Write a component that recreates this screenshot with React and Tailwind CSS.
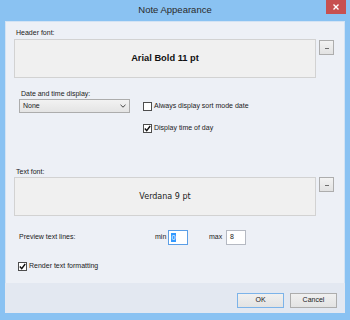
import React from "react";

function Check({ checked }) {
  return (
    <div className="w-[9px] h-[9px] bg-white border border-[#4d4d4d] flex items-center justify-center shrink-0">
      {checked && (
        <svg width="7" height="7" viewBox="0 0 7 7">
          <path d="M0.8 3.6 L2.7 5.6 L6.2 1.0" stroke="#111" strokeWidth="1.4" fill="none" />
        </svg>
      )}
    </div>
  );
}

function DotsButton() {
  return (
    <div className="w-[15px] h-[15px] border border-[#adadad] bg-gradient-to-b from-[#f3f3f3] to-[#e2e2e2] flex items-end justify-center pb-[5px] shrink-0">
      <div className="w-[4px] h-[1px] bg-[#6f6f6f]" />
    </div>
  );
}

function FontBox({ children, className }) {
  return (
    <div className={"w-[302px] h-[39px] bg-[#f0f0f0] border border-[#d2d2d2] flex items-center justify-center " + className}>
      {children}
    </div>
  );
}

export default function App() {
  return (
    <div className="w-[350px] h-[320px] bg-[#8ac2f2] flex flex-col px-[5px] pb-[7px] font-['Liberation_Sans',Arial,sans-serif] text-[7px] text-[#1a1a1a]">
      <div className="relative h-[21px] flex items-center justify-center text-[9.5px] text-[#2a2a2a]">
        <span className="-mt-[1px]">Note Appearance</span>
        <div className="absolute right-[-1px] top-0 w-[20px] h-[14px] bg-[#c75050] flex items-center justify-center">
          <svg width="6" height="6" viewBox="0 0 6 6">
            <path d="M0.5 0.5 L5.5 5.5 M5.5 0.5 L0.5 5.5" stroke="#fff" strokeWidth="1.4" />
          </svg>
        </div>
      </div>

      <div className="flex-1 flex flex-col bg-[#edf0f6] shadow-[inset_0_0_0_1px_#d3e3f4]">
        <div className="pt-[6px] flex flex-col">
          <div className="ml-[11px] leading-[12px]">Header font:</div>
          <div className="flex ml-[9px]">
            <FontBox className="font-bold text-[9.3px] text-[#111]">Arial Bold 11 pt</FontBox>
            <div className="ml-[3px] mt-[1px]">
              <DotsButton />
            </div>
          </div>

          <div className="ml-[16px] mt-[11px] leading-[10px]">Date and time display:</div>
          <div className="flex ml-[14px]">
            <div className="w-[111px] h-[14px] border border-[#acacac] bg-gradient-to-b from-[#f2f2f2] to-[#e4e4e4] flex items-center justify-between pl-[3px] pr-[3px]">
              <span>None</span>
              <svg width="6" height="4" viewBox="0 0 6 4">
                <path d="M0.5 0.8 L3 3.2 L5.5 0.8" stroke="#444" strokeWidth="1" fill="none" />
              </svg>
            </div>
            <div className="ml-[13px] mt-[3px] flex flex-col gap-[13px]">
              <div className="flex items-center h-[9px]">
                <Check />
                <span className="ml-[2px]">Always display sort mode date</span>
              </div>
              <div className="flex items-center h-[9px]">
                <Check checked />
                <span className="ml-[2px]">Display time of day</span>
              </div>
            </div>
          </div>

          <div className="ml-[11px] mt-[34px] leading-[10px]">Text font:</div>
          <div className="flex ml-[9px]">
            <FontBox className="font-['DejaVu_Sans',Verdana,sans-serif] text-[8px] text-[#222]">Verdana 9 pt</FontBox>
            <div className="ml-[3px]">
              <DotsButton />
            </div>
          </div>

          <div className="flex items-center ml-[14px] mt-[14px] h-[15px]">
            <span className="w-[136px]">Preview text lines:</span>
            <span className="w-[13px]">min</span>
            <div className="w-[20px] h-[15px] bg-white border border-[#5b9ee6] flex items-center pl-[2px]">
              <span className="bg-[#3399ff] text-white leading-[9px] px-[0.5px]">0</span>
            </div>
            <span className="ml-[21px] w-[17px]">max</span>
            <div className="w-[20px] h-[15px] bg-white border border-[#b5b9c2] flex items-center pl-[3px]">
              <span>8</span>
            </div>
          </div>

          <div className="flex items-center ml-[13px] mt-[17px] h-[9px]">
            <Check checked />
            <span className="ml-[2px]">Render text formatting</span>
          </div>
        </div>

        <div className="flex-1" />

        <div className="h-[30px] bg-[#e3e8f1] flex justify-end items-start pt-[10px] pr-[8px] gap-[6px]">
          <div className="w-[47px] h-[15px] border border-[#7cb3e9] bg-gradient-to-b from-[#f0f0f0] to-[#e3e3e3] flex items-center justify-center">
            OK
          </div>
          <div className="w-[47px] h-[15px] border border-[#adadad] bg-gradient-to-b from-[#f0f0f0] to-[#e3e3e3] flex items-center justify-center">
            Cancel
          </div>
        </div>
      </div>
    </div>
  );
}
